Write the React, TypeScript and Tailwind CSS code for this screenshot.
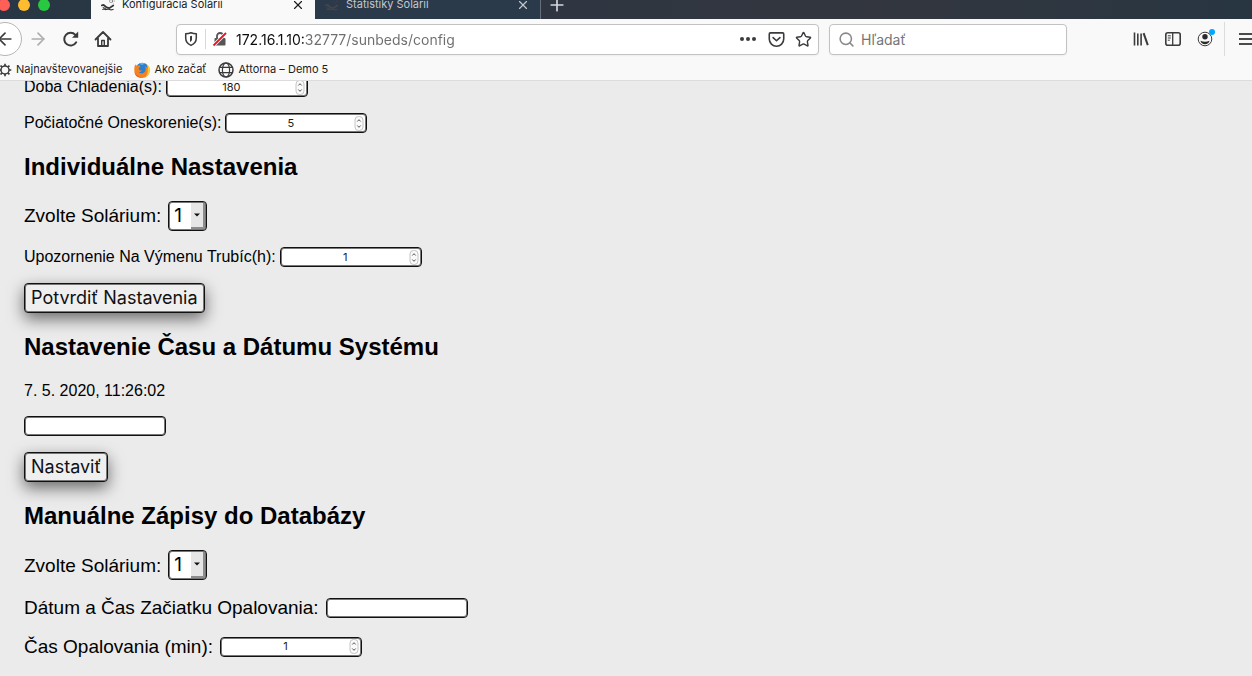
import { ReactNode } from "react";
import { ArrowLeft, ArrowRight, Plus, Search, Star, X } from "lucide-react";

const tabs = [
  { id: 1, title: "Konfigurácia Solárií", active: true },
  { id: 2, title: "Štatistiky Solárií", active: false },
];

function SunbedIcon({ className }: { className: string }) {
  return (
    <svg viewBox="0 0 16 16" className={className} fill="none" stroke="currentColor" strokeLinecap="round">
      <circle cx="11.500" cy="3.500" r="1.800" strokeWidth=".8" opacity=".6" />
      <path d="M11.500 0v.6M15 3.500h.6M14 1l-.4.4M14 6l-.4-.4" strokeWidth=".8" opacity=".6" />
      <path d="M1 8.500 3 8l3.500 2.800 3 .8 4.500-3" strokeWidth="2" />
      <path d="M2 13c1.500-1 2.500.8 4 .2s2.500-.8 4 0 2.500.3 4-.2M2.500 11l2.500 1" strokeWidth="1.200" />
    </svg>
  );
}

function ReloadIcon() {
  return (
    <svg viewBox="0 0 18 18" className="size-[18px]" fill="none">
      <path d="M14.200 12.300A6.400 6.400 0 1 1 13.400 4.800" stroke="#3b3b3d" strokeWidth="2" strokeLinecap="round" />
      <path d="M16.200 1.600v6.200H10Z" fill="#3b3b3d" />
    </svg>
  );
}

function HomeIcon() {
  return (
    <svg viewBox="0 0 18 18" className="size-[18px]" fill="none" stroke="#3b3b3d" strokeWidth="1.800" strokeLinejoin="round" strokeLinecap="round">
      <path d="M1.500 9.500 9 2l7.500 7.500M4 8.500V16h10V8.500" />
      <path d="M7.700 15.500v-5h2.600v5" strokeWidth="1.400" />
    </svg>
  );
}

function GearIcon() {
  return (
    <svg viewBox="0 0 16 16" className="size-3.5" fill="none" stroke="#3b3b3d">
      <circle cx="8" cy="8" r="4.600" strokeWidth="1.700" />
      <path
        d="M8 .8v2.600M8 12.600v2.600M.8 8h2.600M12.600 8h2.600M2.900 2.900l1.900 1.900M11.200 11.200l1.900 1.900M13.100 2.900l-1.900 1.900M4.800 11.200l-1.900 1.900"
        strokeWidth="1.900"
      />
    </svg>
  );
}

function GlobeIcon() {
  return (
    <svg viewBox="0 0 16 16" className="size-4" fill="none" stroke="#3b3b3d" strokeWidth="1.200">
      <circle cx="8" cy="8" r="7" strokeWidth="1.500" />
      <ellipse cx="8" cy="8" rx="3.600" ry="7" />
      <path d="M2 5.300h12M2 10.700h12" />
    </svg>
  );
}

function ShieldIcon() {
  return (
    <svg viewBox="0 0 16 16" className="size-4" fill="none" stroke="#3b3b3d" strokeWidth="1.500" strokeLinejoin="round">
      <path d="M8 1.800c2 .8 3.800 1 5.300 1V7c0 3.700-2 5.900-5.300 7.400C4.700 12.900 2.700 10.700 2.700 7V2.800c1.500 0 3.300-.2 5.300-1Z" />
      <path d="M7 5.200c.8 0 1.400-.2 2-.4V8.500c0 1-.6 1.800-2 2.500Z" fill="#3b3b3d" stroke="none" />
    </svg>
  );
}

function InsecureIcon() {
  return (
    <svg viewBox="0 0 16 16" className="size-4" fill="none">
      <rect x="2.500" y="7" width="11" height="7.500" rx="1" fill="#555" />
      <path d="M5 7V5a3 3 0 0 1 6 0v2" stroke="#555" strokeWidth="1.800" />
      <path d="M1.500 14.500 14 2" stroke="#fff" strokeWidth="3.500" />
      <path d="M1.500 14.500 14 2" stroke="#e8131f" strokeWidth="1.800" />
    </svg>
  );
}

function PocketIcon() {
  return (
    <svg viewBox="0 0 16 16" className="size-[17px]" fill="none" stroke="#3b3b3d" strokeWidth="1.500" strokeLinecap="round" strokeLinejoin="round">
      <path d="M2.200 1.800h11.600c.6 0 1 .4 1 1V7.500a6.800 6.800 0 0 1-13.600 0V2.800c0-.6.4-1 1-1Z" />
      <path d="m4.800 6.200 3.200 3 3.200-3" />
    </svg>
  );
}

function LibraryIcon() {
  return (
    <svg viewBox="0 0 16 16" className="size-4" fill="none" stroke="#3b3b3d" strokeWidth="1.600">
      <path d="M1.500 1.500v13M4.800 2.500v12M8.100 2.500v12" />
      <path d="m10.600 2.200 4.200 12" strokeWidth="2" />
    </svg>
  );
}

function SidebarIcon() {
  return (
    <svg viewBox="0 0 16 16" className="size-4" fill="none" stroke="#3b3b3d" strokeWidth="1.600">
      <rect x=".8" y="1.800" width="14.400" height="12.400" rx="2" />
      <path d="M7.700 2v12" strokeWidth="1.300" />
      <path d="M2.800 4.800h3M2.800 7h3M2.800 9.200h2" strokeWidth="1" />
    </svg>
  );
}

function AccountIcon() {
  return (
    <svg viewBox="0 0 16 16" className="size-4" fill="none">
      <circle cx="8" cy="8" r="6.800" stroke="#3b3b3d" strokeWidth="1" />
      <circle cx="8" cy="5.800" r="2.700" fill="#2b2b2d" />
      <path d="M3.500 9.700c3 1.300 6 1.300 9 0-.3 2.200-2.200 3.500-4.500 3.500s-4.200-1.300-4.500-3.500Z" fill="#2b2b2d" />
    </svg>
  );
}

function FirefoxIcon() {
  return (
    <svg viewBox="0 0 16 16" className="size-4">
      <circle cx="8.300" cy="7.600" r="6.800" fill="#2a7fd0" />
      <path d="M5 1.800c2-1.300 5-1.200 7 .3-1.800-.5-3 0-3.600.8Z" fill="#59bff0" />
      <path d="M1.300 2.200c.2.900.8 1.300 1.600 1.300 1.500-.6 2.800-.2 3.600.6-.3 1.200-1.600 1.400-1.800 2.500-.1 1.500 1.500 2.300 3.200 1.600-.4 1.800-2.300 2-3.200 1.500 1.500 2.300 5.300 1.900 6.600-.8.800-1.900.3-3.700-.6-4.600 2 .6 2.700 2 3 3.200.2-2.200-.3-4-1.300-5.200C14.800 3.800 16 6 15.800 8.500 15.500 12.800 12.200 16 8 16S.3 12.600.3 8.200C.3 6 .5 3.500 1.300 2.200Z" fill="#f58220" />
      <path d="M13.700 7.500c.2-2.200-.3-4-1.300-5.200C14.800 3.800 16 6 15.800 8.500c-.2 3-2 5.500-4.500 6.700 2-2 2.700-4.700 2.400-7.700Z" fill="#ffcb2f" />
      <path d="M.4 9.500C1.500 13 4.500 15 8 15c-2 .9-7 .5-7.600-5.500Z" fill="#e8551f" />
    </svg>
  );
}

function NumberField({ id, value }: { id: string; value: number }) {
  return (
    <span className="flex h-5 w-[142px] items-center rounded-[4px] border border-[#111] bg-white px-px inset-ring inset-ring-[#777]">
      <input
        id={id}
        type="number"
        defaultValue={value}
        className="h-4 w-full min-w-0 flex-1 appearance-none bg-transparent text-center font-[Inter,sans-serif] text-[11px] text-[#222] outline-none [appearance:textfield] [&::-webkit-inner-spin-button]:m-0 [&::-webkit-inner-spin-button]:appearance-none"
      />
      <svg viewBox="0 0 10 15" className="mr-px h-[15px] w-2.5" fill="none" stroke="#c4c4c4">
        <rect x="1" y=".5" width="8" height="14" rx="3.500" fill="#fafafa" />
        <path d="M3.300 5.500 5 3.700l1.700 1.800M3.300 9.500 5 11.300l1.700-1.800" stroke="#555" />
      </svg>
    </span>
  );
}

function TextField({ id, label }: { id: string; label?: string }) {
  return (
    <input
      id={id}
      type="text"
      aria-label={label}
      className="block h-5 w-[142px] rounded-[4px] border border-[#111] bg-white px-1 text-[11px] inset-ring inset-ring-[#777] outline-none"
    />
  );
}

function SunbedSelect({ id }: { id: string }) {
  return (
    <span className="relative block">
      <select
        id={id}
        className="block h-[30px] w-[39px] appearance-none rounded-[4px] border border-[#111] bg-white pl-[5px] font-[Inter,sans-serif] text-[19px] leading-6 text-black inset-ring inset-ring-[#777] outline-none"
      >
        <option>1</option>
        <option>2</option>
        <option>3</option>
      </select>
      <span className="pointer-events-none absolute inset-y-0.5 right-0.5 flex w-3.5 items-center justify-center border-r-2 border-b-2 border-[#8d8d8d] bg-[#e6e6e6]">
        <svg viewBox="0 0 6 4" className="h-1 w-1.5">
          <path d="M0 .5h6L3 3.500Z" fill="#111" />
        </svg>
      </span>
    </span>
  );
}

function SubmitButton({ children }: { children: ReactNode }) {
  return (
    <button
      type="button"
      className="block h-[30px] rounded-[4px] border border-[#111] bg-[#efefef] px-1.5 font-[Inter,sans-serif] text-[18px] leading-6 text-[#111] shadow-[0_6px_16px_rgba(0,0,0,0.55)] inset-ring inset-ring-[#777]"
    >
      {children}
    </button>
  );
}

function BrowserHeader() {
  return (
    <header className="shrink-0 overflow-hidden border-b border-[#dcdcdc] bg-[#f9f9f9] font-[Inter,sans-serif]">
      <div className="-mt-2.5 flex h-[29px] bg-linear-to-r from-[#283645] via-[#33363f] via-70% to-[#283642]">
        <div className="-ml-0.5 flex w-[93px] items-center gap-2">
          <span className="size-3 rounded-full bg-[#ff5f57]"></span>
          <span className="size-3 rounded-full bg-[#febc2e]"></span>
          <span className="size-3 rounded-full bg-[#28c840]"></span>
        </div>
        {tabs.map((tab) => (
          <div
            key={tab.id}
            className={
              tab.active
                ? "flex w-56 items-center bg-[#f9f9f9] pr-2.5 pl-2.5 text-[#1c1c1e]"
                : "flex w-[226px] items-center border-r border-[#66707a] bg-[#2a3a4a] pr-2.5 pl-2.5 text-[#c3c8ce]"
            }
          >
            <SunbedIcon className={tab.active ? "size-3.5 text-[#333]" : "size-3.5 text-[#474448]"} />
            <span className="ml-[7px] flex-1 text-[11px] whitespace-nowrap">{tab.title}</span>
            <button type="button" aria-label="Zavrieť kartu">
              <X className="size-3.5" strokeWidth={2} />
            </button>
          </div>
        ))}
        <button type="button" aria-label="Nová karta" className="ml-1.5 text-[#d5d9dd]">
          <Plus className="size-5" strokeWidth={2} />
        </button>
      </div>

      {/* Navigation bar */}
      <div className="flex h-10 items-center">
        <button type="button" aria-label="Späť" className="-ml-3 flex size-[34px] shrink-0 items-center justify-center rounded-full border border-[#b5b5b5] bg-white text-[#3b3b3d]">
          <ArrowLeft className="size-5" strokeWidth={2} />
        </button>
        <button type="button" aria-label="Dopredu" className="ml-1.5 text-[#adadad]">
          <ArrowRight className="size-5" strokeWidth={2} />
        </button>
        <button type="button" aria-label="Obnoviť" className="ml-3.5">
          <ReloadIcon />
        </button>
        <button type="button" aria-label="Domov" className="ml-3.5">
          <HomeIcon />
        </button>
        <div className="ml-16 flex h-[31px] flex-1 items-center rounded-[4px] border border-[#c2c2c2] bg-white pr-1.5 pl-1.5 shadow-xs">
          <ShieldIcon />
          <span className="mx-1.5 h-5 w-px bg-[#d9d9d9]"></span>
          <InsecureIcon />
          <input
            aria-label="Adresa"
            defaultValue="172.16.1.10:32777/sunbeds/config"
            className="ml-2 min-w-0 flex-1 bg-[linear-gradient(90deg,#0c0c0d_69px,#6d6d6f_69px)] bg-clip-text text-[14px] text-transparent outline-none"
          />
          <button type="button" aria-label="Akcie stránky" className="flex gap-0.5">
            <span className="size-1 rounded-full bg-[#3b3b3d]"></span>
            <span className="size-1 rounded-full bg-[#3b3b3d]"></span>
            <span className="size-1 rounded-full bg-[#3b3b3d]"></span>
          </button>
          <button type="button" aria-label="Pocket" className="ml-3">
            <PocketIcon />
          </button>
          <button type="button" aria-label="Záložka" className="ml-2.5 text-[#3b3b3d]">
            <Star className="size-[17px]" strokeWidth={2} />
          </button>
        </div>
        <div className="ml-2.5 flex h-[31px] w-[238px] items-center rounded-[4px] border border-[#c2c2c2] bg-white px-2 shadow-xs">
          <Search className="size-[17px] shrink-0 text-[#88888a]" strokeWidth={2.200} />
          <input aria-label="Vyhľadávanie" placeholder="Hľadať" className="ml-1.5 min-w-0 flex-1 text-[14px] outline-none placeholder:text-[#757577]" />
        </div>
        <button type="button" aria-label="Knižnica" className="ml-[66px]">
          <LibraryIcon />
        </button>
        <button type="button" aria-label="Bočný panel" className="ml-4">
          <SidebarIcon />
        </button>
        <button type="button" aria-label="Účet" className="relative ml-4">
          <AccountIcon />
          <span className="absolute -top-0.5 -right-0.5 size-1.5 rounded-full bg-[#00a8ff]"></span>
        </button>
        <span className="ml-[11px] h-[34px] w-px bg-[#dcdcdc]"></span>
        <button type="button" aria-label="Ponuka" className="ml-3.5 flex w-[13px] flex-col gap-[3px]">
          <span className="h-0.5 w-4 bg-[#4a4a4c]"></span>
          <span className="h-0.5 w-4 bg-[#4a4a4c]"></span>
          <span className="h-0.5 w-4 bg-[#4a4a4c]"></span>
        </button>
      </div>

      {/* Bookmarks */}
      <nav className="-ml-0.5 flex h-[21px] items-center gap-3 text-[11px] text-[#1c1c1e]">
        <a href="#top-sites" className="flex items-center gap-1">
          <GearIcon />
          Najnavštevovanejšie
        </a>
        <a href="#start" className="flex items-center gap-1">
          <FirefoxIcon />
          Ako začať
        </a>
        <a href="#attorna" className="flex items-center gap-1">
          <GlobeIcon />
          Attorna – Demo 5
        </a>
      </nav>
    </header>
  );
}

export default function App() {
  return (
    <div className="flex h-screen flex-col overflow-hidden bg-[#ebebeb] text-black">
      <BrowserHeader />
      <main className="min-h-0 flex-1 overflow-hidden pl-6 font-['Liberation_Sans',Arial,sans-serif]">
        <form className="-mt-1 flex flex-col gap-5">
          <div className="flex flex-col gap-4">
            <div className="flex h-5 items-center gap-1">
              <label htmlFor="cooling">Doba Chladenia(s):</label>
              <NumberField id="cooling" value={180} />
            </div>
            <div className="flex h-5 items-center gap-1">
              <label htmlFor="delay">Počiatočné Oneskorenie(s):</label>
              <NumberField id="delay" value={5} />
            </div>
          </div>

          <h2 className="text-2xl leading-7 font-bold">Individuálne Nastavenia</h2>
          <div className="flex flex-col items-start gap-4">
            <div className="flex items-center gap-[7px]">
              <label htmlFor="sunbed" className="text-[19px] leading-6">Zvolte Solárium:</label>
              <SunbedSelect id="sunbed" />
            </div>
            <div className="flex h-5 items-center gap-1">
              <label htmlFor="tubes">Upozornenie Na Výmenu Trubíc(h):</label>
              <NumberField id="tubes" value={1} />
            </div>
            <SubmitButton>Potvrdiť Nastavenia</SubmitButton>
          </div>

          <h2 className="text-2xl leading-7 font-bold">Nastavenie Času a Dátumu Systému</h2>
          <div className="flex flex-col items-start gap-4">
            <p className="leading-[19px]">7. 5. 2020, 11:26:02</p>
            <TextField id="system-time" label="Čas a dátum systému" />
            <SubmitButton>Nastaviť</SubmitButton>
          </div>

          <h2 className="text-2xl leading-7 font-bold">Manuálne Zápisy do Databázy</h2>
          <div className="flex flex-col items-start gap-4 text-[19px] leading-[23px]">
            <div className="flex items-center gap-[7px]">
              <label htmlFor="manual-sunbed">Zvolte Solárium:</label>
              <SunbedSelect id="manual-sunbed" />
            </div>
            <div className="flex items-center gap-[7px]">
              <label htmlFor="start-time">Dátum a Čas Začiatku Opalovania:</label>
              <TextField id="start-time" />
            </div>
            <div className="flex items-center gap-[7px]">
              <label htmlFor="duration">Čas Opalovania (min):</label>
              <NumberField id="duration" value={1} />
            </div>
          </div>
        </form>
      </main>
    </div>
  );
}
